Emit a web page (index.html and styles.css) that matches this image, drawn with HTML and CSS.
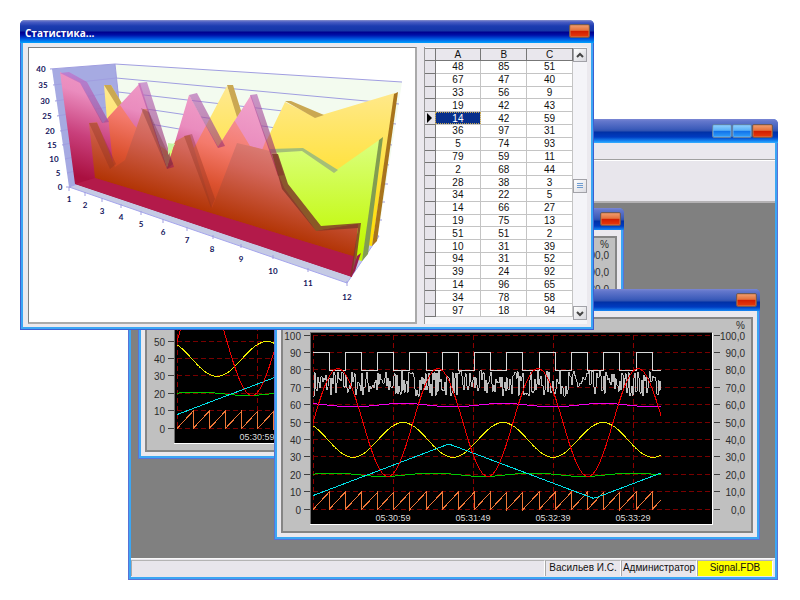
FILE: index.html
```html
<!DOCTYPE html>
<html lang="ru">
<head>
<meta charset="utf-8">
<title>Signal</title>
<link rel="stylesheet" href="styles.css">
</head>
<body>
<main class="desktop">
  <section class="window window-main">
    <header class="titlebar">
      <button class="caption-btn blue" type="button" aria-label="Свернуть"></button>
      <button class="caption-btn blue" type="button" aria-label="Развернуть"></button>
      <button class="caption-btn" type="button" aria-label="Закрыть"></button>
    </header>
    <div class="menubar"></div>
    <div class="toolbar"></div>
    <div class="mdi">
      <section class="window child trend-back">
        <header class="titlebar"><button class="caption-btn" type="button" aria-label="Закрыть"></button></header>
        <div class="client"><div class="trend-panel"><svg class="trend" viewBox="283 319 468 212"></svg></div></div>
      </section>
      <section class="window child trend-front">
        <header class="titlebar"><button class="caption-btn" type="button" aria-label="Закрыть"></button></header>
        <div class="client"><div class="trend-panel"><svg class="trend" viewBox="283 319 468 212"></svg></div></div>
      </section>
    </div>
    <footer class="statusbar">
      <span class="grow"></span><span>Васильев И.С.</span><span>Администратор</span><span class="db">Signal.FDB</span>
    </footer>
  </section>

  <section class="window window-stats">
    <header class="titlebar active"><h1>Статистика...</h1><button class="caption-btn" type="button" aria-label="Закрыть"></button></header>
    <div class="stats-body">
      <div class="chart-panel">
        <svg class="chart" viewBox="29 48 386 274">
          <defs>
            <linearGradient id="gy" x1="0" y1="85" x2="0" y2="245" gradientUnits="userSpaceOnUse"><stop offset="0" stop-color="#ffe992"/><stop offset=".55" stop-color="#ffe23c"/><stop offset="1" stop-color="#ffdc00"/></linearGradient>
            <linearGradient id="gg" x1="0" y1="140" x2="0" y2="250" gradientUnits="userSpaceOnUse"><stop offset="0" stop-color="#dbff80"/><stop offset="1" stop-color="#c0f800"/></linearGradient>
            <linearGradient id="gp" x1="200" y1="75" x2="159" y2="202" gradientUnits="userSpaceOnUse"><stop offset="0" stop-color="#f2a6cd"/><stop offset=".4" stop-color="#ea8cbe"/><stop offset=".7" stop-color="#c9407c"/><stop offset="1" stop-color="#aa1040"/></linearGradient>
            <linearGradient id="gs" x1="215" y1="95" x2="178" y2="210" gradientUnits="userSpaceOnUse"><stop offset="0" stop-color="#f59aa4"/><stop offset=".4" stop-color="#f47a6c"/><stop offset=".7" stop-color="#dc5230"/><stop offset="1" stop-color="#b43508"/></linearGradient>
            <linearGradient id="gb" x1="215" y1="112" x2="186" y2="206" gradientUnits="userSpaceOnUse"><stop offset="0" stop-color="#e08c88"/><stop offset=".45" stop-color="#d3665a"/><stop offset="1" stop-color="#b23404"/></linearGradient>
            <linearGradient id="ge" x1="0" y1="72" x2="0" y2="180" gradientUnits="userSpaceOnUse"><stop offset="0" stop-color="#c070cc"/><stop offset=".5" stop-color="#a04a90"/><stop offset="1" stop-color="#9c1038"/></linearGradient>
            <clipPath id="front"><path d="M60 72 80 82 103 123 140 83 167 169 189 95 218 147 251 95 279 176 284 188 316 231 358 224 352 277 75 184Z"/></clipPath>
          </defs>
          <path fill="#a6aae2" d="M52 69 115 64 128 176 69 187Z"/>
          <path fill="#f3fbef" d="M115 64 402 82 378 237 128 160Z"/>
          <path fill="#c5cae4" stroke="#a5a5ec" d="M69 187 110 172 379 236 347 283Z"/>
          <path fill="none" stroke="#a09ee0" d="M50 69 115 64 402 82M53 85 116 78 399 104M55 101 118 92 396 124M57 116 119 105 392 145M60 131 121 119 389 165M62 145 122 132M65 159 124 145M67 173 126 158M66 187H71M115 64 120 110M384 184h4M381 202h4M378 220h4M69 187V191M85 192V196M102 198V202M121 204V208M141 211V215M163 219V223M187 227V231M213 235V239M241 244V248M273 255V259M308 268V272M347 281V286"/>
          <path fill="url(#gy)" d="M104 85 111 85 134 125 185 165 227 86 250 145 262 150 285 102 315 117 395 93 372 246 113 190Z"/>
          <path fill="#caa852" d="M104 85H111L135 125 129 125ZM227 85 233 85 252 146 246 146ZM285 101 291 101 324 115 315 118Z"/>
          <path fill="#a8741c" d="M394 94 398 92 377 241 372 246Z"/>
          <path fill="url(#gg)" d="M89 123 110 168 125 160 143 108 165 157 174 143 190 135 212 208 237 143 270 151 303 149 335 171 382 138 362 261 96 179Z"/>
          <path fill="#a5bf77" d="M237 143 245 143 270 149 303 148 338 170 334 173 302 151 270 153Z"/>
          <path fill="#829d51" d="M379 140 383 137 368 254 362 261Z"/>
          <path fill="url(#gp)" d="M60 72 80 82 103 123 140 83 167 169 189 95 218 147 251 95 279 176 284 188 316 231 358 224 352 277 75 184Z"/>
          <g clip-path="url(#front)">
            <path fill="url(#gs)" d="M105 85 113 95 134 125 168 160 185 165 210 118 221 138 233 118 250 146 262 150 270 130H400V280L359 258 95 178 114 175Z"/>
            <path fill="url(#gb)" d="M89 123 97 122 115 167 125 160 143 109 150 109 165 147 185 136 190 135 212 208 237 143 270 151 303 149H400V280L359 258 95 178Z"/>
            <path fill="#8a3120" opacity=".35" d="M89 123H97L116 164 110 169ZM184 136 192 134 215 199 211 208Z"/>
            <path fill="#b31a4a" d="M75 184 95 178 359 258 352 277Z"/>
          </g>
          <path fill="url(#ge)" opacity=".7" d="M60 73 69 72 87 82 109 122 102 123 80 83Z"/>
          <path fill="url(#ge)" opacity=".65" d="M138 83 147 82 174 167 167 169Z"/>
          <path fill="#6a2a30" opacity=".35" d="M141 108 149 112 173 164 167 169Z"/>
          <path fill="url(#ge)" opacity=".65" d="M189 95 197 93 225 146 218 148Z"/>
          <path fill="url(#ge)" opacity=".65" d="M250 95 257 94 284 175 278 176Z"/>
          <path fill="#7f3b28" opacity=".85" d="M272 154 278 154 288 184 321 226 361 223 355 270 350 277 358 228 316 231 282 189Z"/>
          <path fill="#991d4c" d="M357 256 361 253 355 271 351 277Z"/>
          <path fill="#c7f7a4" d="M168 143 175 144 168 155Z"/>
          <g class="axis" text-anchor="middle">
            <text x="41" y="72">40</text><text x="43" y="88">35</text><text x="45" y="104">30</text><text x="47" y="119">25</text><text x="50" y="134">20</text><text x="52" y="148">15</text><text x="54" y="162">10</text><text x="58" y="176">5</text><text x="60" y="190">0</text>
            <text x="69" y="202">1</text><text x="85" y="208">2</text><text x="102" y="214">3</text><text x="121" y="220">4</text><text x="141" y="227">5</text><text x="163" y="235">6</text><text x="187" y="243">7</text><text x="212" y="252">8</text><text x="241" y="262">9</text><text x="273" y="274">10</text><text x="308" y="286">11</text><text x="347" y="300">12</text>
          </g>
        </svg>
      </div>
      <div class="grid">
        <table>
          <colgroup><col class="ind"><col><col><col></colgroup>
          <thead><tr><th></th><th>A</th><th>B</th><th>C</th></tr></thead>
          <tbody>
            <tr><th></th><td>48</td><td>85</td><td>51</td></tr>
            <tr><th></th><td>67</td><td>47</td><td>40</td></tr>
            <tr><th></th><td>33</td><td>56</td><td>9</td></tr>
            <tr><th></th><td>19</td><td>42</td><td>43</td></tr>
            <tr><th class="current"></th><td class="selected">14</td><td>42</td><td>59</td></tr>
            <tr><th></th><td>36</td><td>97</td><td>31</td></tr>
            <tr><th></th><td>5</td><td>74</td><td>93</td></tr>
            <tr><th></th><td>79</td><td>59</td><td>11</td></tr>
            <tr><th></th><td>2</td><td>68</td><td>44</td></tr>
            <tr><th></th><td>28</td><td>38</td><td>3</td></tr>
            <tr><th></th><td>34</td><td>22</td><td>5</td></tr>
            <tr><th></th><td>14</td><td>66</td><td>27</td></tr>
            <tr><th></th><td>19</td><td>75</td><td>13</td></tr>
            <tr><th></th><td>51</td><td>51</td><td>2</td></tr>
            <tr><th></th><td>10</td><td>31</td><td>39</td></tr>
            <tr><th></th><td>94</td><td>31</td><td>52</td></tr>
            <tr><th></th><td>39</td><td>24</td><td>92</td></tr>
            <tr><th></th><td>14</td><td>96</td><td>65</td></tr>
            <tr><th></th><td>34</td><td>78</td><td>58</td></tr>
            <tr><th></th><td>97</td><td>18</td><td>94</td></tr>
          </tbody>
        </table>
        <div class="scrollbar">
          <button type="button" aria-label="Вверх"><svg viewBox="0 0 12 12"><path d="M3 8 6 5 9 8"/></svg></button>
          <div class="track"><div class="thumb"></div></div>
          <button type="button" aria-label="Вниз"><svg viewBox="0 0 12 12"><path d="M3 5 6 8 9 5"/></svg></button>
        </div>
      </div>
    </div>
  </section>
</main>
<script src="trend.js"></script>
</body>
</html>
```
FILE: styles.css
```css
* { box-sizing: border-box; }
body {
  margin: 0;
  background: #fff;
  color: #111;
  font: 10px/12px "Liberation Sans", sans-serif;
}
.desktop { position: relative; min-height: 100vh; overflow: hidden; }

.window {
  position: absolute;
  display: flex;
  flex-direction: column;
  padding: 0 2px 2px;
  border: 1px solid #5a72d4;
  border-top: 0;
  border-radius: 5px 5px 0 0;
  background: #3ba6f4;
}
.window-main { left: 128px; top: 119px; width: 650px; height: 461px; }
.window-stats { left: 20px; top: 20px; width: 574px; height: 310px; border-color: #3f5fd0; }
.child { width: 486px; height: 251px; }
.trend-back { left: 7px; top: 5px; }
.trend-front { left: 143px; top: 86px; }

.titlebar {
  display: flex;
  flex: none;
  align-items: flex-start;
  justify-content: flex-end;
  height: 24px;
  margin: 0 -3px;
  padding: 5px 5px 0;
  border-radius: 5px 5px 0 0;
  background: linear-gradient(#7b86d4, #6478cc 2px, #3c5cba 10px, #2c50b0 12px, #0030a6 13px, #003cc0 18px, #1688f4 22px, #36b0ff);
}
.child > .titlebar { height: 22px; padding: 4px 3px 0; }
.titlebar.active {
  height: 23px;
  padding: 4px 4px 0 5px;
  background: linear-gradient(#8890cc, #4a5ec4 2px, #1c3cb0 6px, #1436a8 11px, #00008c 12px, #0010a8 15px, #0058e0 19px, #00a2ff);
}
h1 {
  flex: 1;
  margin: 0;
  padding-top: 2px;
  color: #fff;
  font: bold 10px/14px "Open Sans", sans-serif;
}
.caption-btn {
  width: 21px;
  height: 14px;
  padding: 0;
  border: 1px solid #6e5a58;
  border-radius: 2px;
  background: linear-gradient(#f0a070, #e4703c 45%, #d01c00 50%, #e83c0c);
  box-shadow: inset 0 0 0 1px #c9784c88;
}
.caption-btn.blue {
  width: 20px;
  border-color: #6080a8;
  background: linear-gradient(#90d0fc, #58b0f8 45%, #1070e8 50%, #30a0fc);
  box-shadow: inset 0 0 0 1px #70b0e888;
}

.menubar { height: 17px; background: #eae8ee; border-bottom: 1px solid #a0a0a0; }
.toolbar { height: 43px; background: #e8e6ec; border-top: 1px solid #fff; border-bottom: 2px solid #b4b2b4; }
.mdi { position: relative; flex: 1; background: #808080; overflow: hidden; }
.statusbar { display: flex; flex: none; height: 19px; padding: 1px 2px 1px 0; background: #e8e6ec; border-top: 1px solid #f8f8f8; }
.statusbar span {
  flex: none;
  width: 76px;
  border-left: 1px solid #a8a8a8;
  border-right: 1px solid #fff;
  border-top: 1px solid #b4b4b4;
  text-align: center;
  white-space: nowrap;
  line-height: 14px;
}
.statusbar .grow { flex: 1; }
.statusbar .db { background: #ff0; }

.client { flex: 1; padding: 6px 4px 4px; background: #ebe9ee; }
.trend-panel { height: 100%; border: 2px solid #858585; background: #c0c0c0; }
.trend { display: block; width: 100%; height: 100%; shape-rendering: crispEdges; }
.trend text { fill: #2c2c2c; }
.trend .time { fill: #dcdcdc; font-size: 9px; }

.stats-body { display: flex; flex: 1; gap: 7px; min-height: 0; padding: 4px 4px 3px 5px; background: #ebe9ee; }
.chart-panel { flex: 1; min-width: 0; border: 1px solid #808080; border-right: 2px solid #aaa; border-bottom: 2px solid #aaa; background: #fff; }
.chart { display: block; width: 100%; height: 100%; }
.axis text { fill: #14145c; font: bold 8px "Lato", sans-serif; }

.grid { display: grid; grid-template-columns: 1fr 14px; flex: none; align-items: start; width: 163px; padding: 1px 0; background: #f6f6f8; border-left: 1px solid #999; }
table { width: 100%; height: 269px; border-collapse: collapse; table-layout: fixed; background: #fff; }
.ind { width: 10px; }
th, td { padding: 0; border-right: 1px solid #c4c4c4; border-bottom: 1px solid #c4c4c4; text-align: center; font-weight: normal; line-height: 11px; }
thead th { background: #e9e7ed; border-color: #777; border-top: 1px solid #888; }
tbody th { background: #e6e4ea; border-color: #777; }
td.selected { background: #08308c; color: #fff; outline: 1px dotted #c8a850; outline-offset: -1px; }
.current::before { content: ""; display: block; width: 5px; margin-left: 2px; border: solid transparent; border-width: 5px 0 5px 5px; border-left-color: #000; }
.scrollbar { display: flex; flex-direction: column; height: 272px; background: #f4f4f8; }
.scrollbar button, .thumb {
  width: 14px;
  height: 14px;
  padding: 0;
  border: 1px solid #a2a2a8;
  background: linear-gradient(135deg, #fff, #d6d6dc);
}
.scrollbar svg { display: block; width: 12px; height: 12px; fill: none; stroke: #444; stroke-width: 2; }
.track { display: flex; flex: 1; flex-direction: column; padding-top: 117px; }
.thumb { background: linear-gradient(#6f9cd0, #6f9cd0) 3px 3px / 6px 1px no-repeat, linear-gradient(#6f9cd0, #6f9cd0) 3px 5px / 6px 1px no-repeat, linear-gradient(#6f9cd0, #6f9cd0) 3px 7px / 6px 1px no-repeat, linear-gradient(135deg, #fff, #dcdce2); }
```
FILE: trend.js
```js
// Draws the signal trends: 0..100 scale, one vertical grid line every 50 s.
const LEFT = 313, RIGHT = 661, PLOT_RIGHT = 711;
const PULSE = 16.15;
const yOf = v => 509.5 - v * 1.74;
const wave = x => (2 * Math.PI * (x - LEFT)) / 100;

function curve(color, fn) {
  let d = '';
  for (let x = LEFT; x <= RIGHT; x++) d += (d ? 'L' : 'M') + x + ' ' + yOf(fn(x)).toFixed(1);
  return `<path d="${d}" fill="none" stroke="${color}"/>`;
}

function points(color, list) {
  return `<polyline points="${list.map(([x, v]) => x.toFixed(1) + ',' + yOf(v).toFixed(1)).join(' ')}" fill="none" stroke="${color}"/>`;
}

function trend() {
  let s = '<rect x="311" y="333" width="401" height="191" fill="#000"/>' +
    '<path d="M310.500 524V332.500H712" fill="none" stroke="#707070"/><path d="M310 524.500H712.500V333" fill="none" stroke="#fff"/>';
  for (let v = 0; v <= 100; v += 10) {
    const y = Math.round(yOf(v)) - 0.5;
    s += `<path d="M313 ${y}H${PLOT_RIGHT}" stroke="#780000" stroke-dasharray="5 3"/>`;
    s += `<path d="M304 ${y}H310M714 ${y}H720" stroke="#404040"/>`;
    s += `<text x="301" y="${y + 4}" text-anchor="end">${v}</text>`;
    s += `<text x="745" y="${y + 4}" text-anchor="end">${v},0</text>`;
  }
  s += '<text x="745" y="329" text-anchor="end">%</text>';
  ['', '05:30:59', '05:31:49', '05:32:39', '05:33:29'].forEach((t, i) => {
    const x = LEFT + i * 80;
    s += `<path d="M${x + 0.5} 335V510" stroke="#8c0000" stroke-dasharray="5 3"/>`;
    s += `<text class="time" x="${x}" y="521" text-anchor="middle">${t}</text>`;
  });

  const square = [], saw = [];
  for (let i = 0, x = LEFT; x < RIGHT; i++, x += PULSE) {
    const end = Math.min(x + PULSE, RIGHT), level = i % 2 ? 80 : 90;
    square.push([x, level], [end, level]);
    saw.push([x, 0], [end, ((end - x) / PULSE) * 10]);
  }
  const noise = [[LEFT, 65]];
  let seed = 7;
  for (let x = LEFT + 1; x <= RIGHT; x += 1) {
    seed = (seed * 16807) % 2147483647;
    noise.push([x, 65 + (seed / 2147483647) * 15]);
  }
  s += points('#d8d8d8', square) + points('#bcbcbc', noise) + points('#f07838', saw);
  s += curve('#f000f0', x => 60 + Math.cos(wave(x + 10)));
  s += curve('#00c800', x => 20 + Math.sin(wave(x + 5)));
  s += curve('#f0f000', x => 40 + 10 * Math.cos(wave(x + 10)));
  s += points('#00e0e8', [[313, 8], [448, 37.5], [452, 37], [593, 6.5], [597, 7], [661, 21]]);
  s += curve('#f00000', x => 50 + 31 * Math.sin(wave(x)));
  return s;
}

document.querySelectorAll('.trend').forEach(el => { el.innerHTML = trend(); });
```
